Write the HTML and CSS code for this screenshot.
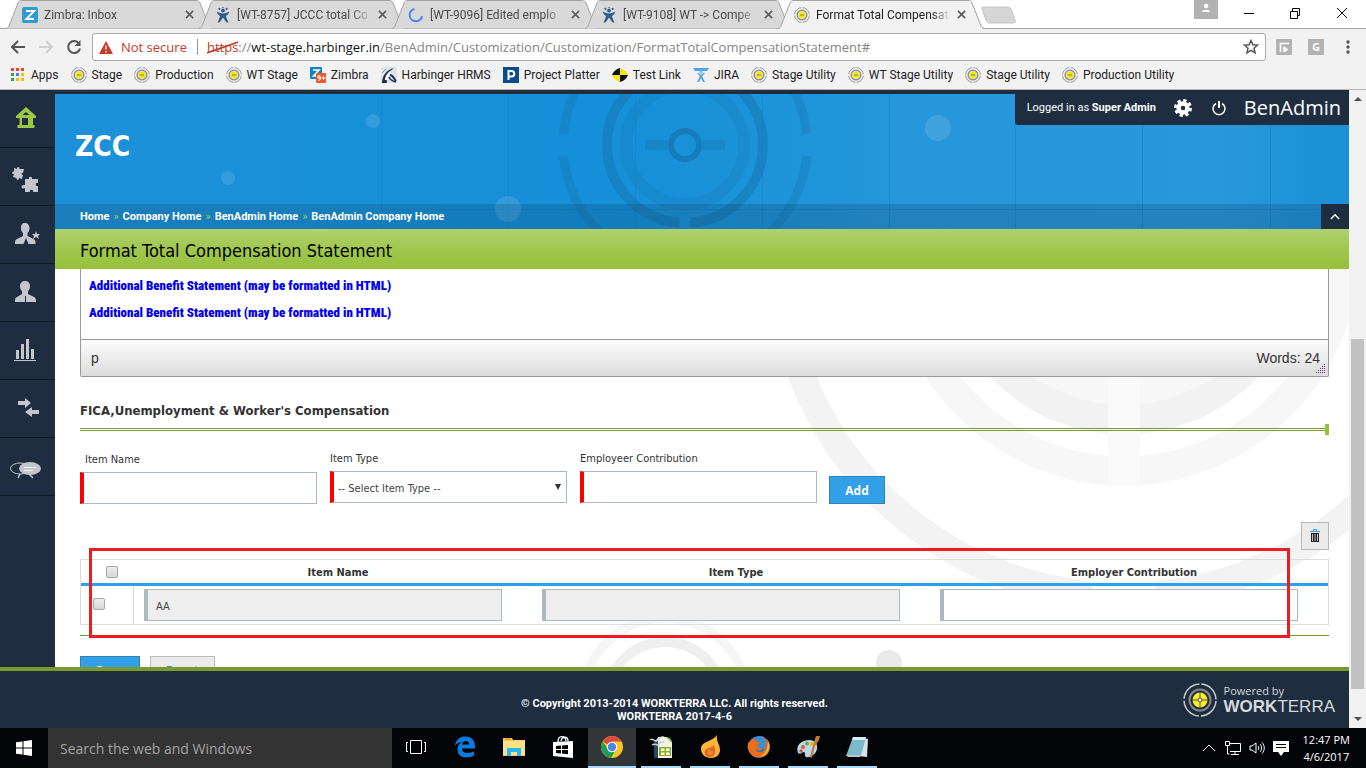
FILE: index.html
```
<!DOCTYPE html>
<html lang="en">

<head>
  <meta charset="UTF-8" />
  <meta name="viewport" content="width=device-width, initial-scale=1.0" />
  <title>Format Total Compensation Statement</title>
  <link rel="stylesheet" href="styles.css">
</head>

<body>
  <!-- Shared icons -->
  <svg class="sprite" aria-hidden="true">
    <symbol id="target" viewBox="0 0 16 16">
      <circle cx="8" cy="8" r="7.400" fill="#f4f4f4" stroke="#9a9a9a" stroke-width="1" />
      <circle cx="8" cy="8" r="4.800" fill="#e8e8e8" stroke="#909090" stroke-width="1.500" />
      <circle cx="8" cy="8" r="3.500" fill="#f3e71c" />
      <path d="M6 8h4" stroke="#8a8428" stroke-width="1" />
      <path d="M8 0v2M8 14v2M0 8h2M14 8h2" stroke="#fff" />
    </symbol>
    <symbol id="jira" viewBox="0 0 16 16">
      <circle cx="8" cy="3.600" r="1.900" />
      <circle cx="4.400" cy="1.800" r="1.100" />
      <circle cx="11.600" cy="1.800" r="1.100" />
      <circle cx="8" cy=".8" r=".8" />
      <path d="M1.800 4.800c2 .4 3.600 1.600 6.200 1.600s4.200-1.200 6.200-1.600c-.2 2-1.700 3.200-3.400 4.200l2.600 6.400c-1.300.4-2.300 0-2.700-.8L8 10.600l-2.700 4c-.4.8-1.400 1.200-2.700.8l2.600-6.400C3.500 8 2 6.800 1.800 4.800z" />
    </symbol>
    <symbol id="tab-shape" viewBox="0 0 206 29" preserveAspectRatio="none">
      <path d="M0 28.500C2 28 2.500 27 3 26L12 3C13 1 14 .5 16 .5H190C192 .5 193 1 194 3L203 26C203.500 27 204 28 206 28.500" stroke="#a3a3a3" />
    </symbol>
    <symbol id="close" viewBox="0 0 10 10">
      <path d="M1 1l8 8M9 1L1 9" stroke="#5a5a5a" stroke-width="1.700" />
    </symbol>
  </svg>

  <!-- Browser tabs -->
  <div class="tab-strip">
    <div class="tab">
      <svg class="tab-bg"><use href="#tab-shape" /></svg>
      <svg class="icon" viewBox="0 0 16 16"><rect width="16" height="16" rx="2" fill="#2f9bd0" /><path d="M4 4h8L4.500 12H12" fill="none" stroke="#fff" stroke-width="2" /></svg>
      <span class="tab-title">Zimbra: Inbox</span>
      <button class="tab-close" aria-label="Close tab"><svg><use href="#close" /></svg></button>
    </div>
    <div class="tab">
      <svg class="tab-bg"><use href="#tab-shape" /></svg>
      <svg class="icon jira-dark"><use href="#jira" /></svg>
      <span class="tab-title">[WT-8757] JCCC total Co</span>
      <button class="tab-close" aria-label="Close tab"><svg><use href="#close" /></svg></button>
    </div>
    <div class="tab">
      <svg class="tab-bg"><use href="#tab-shape" /></svg>
      <svg class="icon" viewBox="0 0 16 16"><path d="M6.500 2A6.200 6.200 0 1 0 14 9" fill="none" stroke="#4285f4" stroke-width="2" /></svg>
      <span class="tab-title">[WT-9096] Edited emplo</span>
      <button class="tab-close" aria-label="Close tab"><svg><use href="#close" /></svg></button>
    </div>
    <div class="tab">
      <svg class="tab-bg"><use href="#tab-shape" /></svg>
      <svg class="icon jira-dark"><use href="#jira" /></svg>
      <span class="tab-title">[WT-9108] WT -&gt; Compe</span>
      <button class="tab-close" aria-label="Close tab"><svg><use href="#close" /></svg></button>
    </div>
    <div class="tab active">
      <svg class="tab-bg"><use href="#tab-shape" /></svg>
      <svg class="icon"><use href="#target" /></svg>
      <span class="tab-title">Format Total Compensati</span>
      <button class="tab-close" aria-label="Close tab"><svg><use href="#close" /></svg></button>
    </div>
    <button class="new-tab" aria-label="New tab"><svg viewBox="0 0 36 18"><path d="M3 1h24c2 0 3 .5 4 2l4 11c.5 2 0 3-2 3H10c-2 0-3-1-4-3L2 3C1.500 2 2 1 3 1z" fill="#d6d6d6" stroke="#c4c4c4" /></svg></button>
    <div class="window-controls">
      <button class="profile" aria-label="Profile"><svg viewBox="0 0 24 19"><circle cx="12" cy="6" r="2.300" fill="#fff" /><path d="M8 12c0-3 8-3 8 0z" fill="#fff" /></svg></button>
      <button aria-label="Minimize"><svg viewBox="0 0 12 12"><path d="M1 6.500h10" /></svg></button>
      <button aria-label="Restore"><svg viewBox="0 0 12 12"><path d="M1.500 4.500h7v7h-7zM3.500 4V1.500h7v7H9" /></svg></button>
      <button aria-label="Close window"><svg viewBox="0 0 12 12"><path d="M1 1l10 10M11 1L1 11" /></svg></button>
    </div>
  </div>

  <!-- Address bar -->
  <div class="toolbar">
    <button class="nav-btn" aria-label="Back"><svg viewBox="0 0 16 16"><path d="M15 8H2M8 2L2 8l6 6" stroke="#555" /></svg></button>
    <button class="nav-btn" aria-label="Forward"><svg viewBox="0 0 16 16"><path d="M1 8h13M8 2l6 6-6 6" stroke="#cfcfcf" /></svg></button>
    <button class="nav-btn" aria-label="Reload"><svg viewBox="0 0 16 16"><path d="M13 4.500A6 6 0 1 0 14 9.500" stroke="#555" /><path d="M14.500 1v6h-6z" fill="#555" /></svg></button>
    <div class="address">
      <svg class="warn" viewBox="0 0 14 13"><path d="M7 0l7 13H0z" fill="#c53929" /><path d="M7 4.500v4M7 10v1.500" stroke="#fff" stroke-width="1.400" /></svg>
      <span class="not-secure">Not secure</span>
      <span class="url"><span class="scheme">https<svg viewBox="0 0 34 14" preserveAspectRatio="none"><path d="M0 13L34 2" stroke="#c53929" stroke-width="1.800" /></svg></span>://<b>wt-stage.harbinger.in</b>/BenAdmin/Customization/Customization/FormatTotalCompensationStatement#</span>
      <svg class="star" viewBox="0 0 16 16"><path d="M8 1.500l1.900 4.300 4.600.4-3.500 3.100 1.100 4.600L8 11.400l-4.100 2.500L5 9.300 1.500 6.200l4.600-.4z" fill="none" stroke="#555" stroke-width="1.500" /></svg>
    </div>
    <button class="ext" aria-label="Extension"><svg viewBox="0 0 16 16"><rect width="16" height="16" rx="1" fill="#b3b3b3" /><path d="M4.500 13V4.500H13M8 13V7.500" fill="none" stroke="#fff" stroke-width="1.600" /><path d="M9 8l3.500 2.500L9 13z" fill="#fff" /></svg></button>
    <button class="ext ext-g">G</button>
    <button class="dots" aria-label="Menu"><svg viewBox="0 0 4 14"><circle cx="2" cy="2" r="1.700" /><circle cx="2" cy="7" r="1.700" /><circle cx="2" cy="12" r="1.700" /></svg></button>
  </div>

  <!-- Bookmarks -->
  <nav class="bookmarks">
    <a href="#"><svg class="icon" viewBox="0 0 16 16"><path d="M1 1h3v3H1zM6 1h3v3H6zM11 1h3v3h-3z" fill="#ea4335" /><path d="M1 6h3v3H1zM1 11h3v3H1z" fill="#34a853" /><path d="M6 6h3v3H6z" fill="#4285f4" /><path d="M11 6h3v3h-3zM6 11h3v3H6zM11 11h3v3h-3z" fill="#fbbc05" /></svg>Apps</a>
    <a href="#"><svg class="icon"><use href="#target" /></svg>Stage</a>
    <a href="#"><svg class="icon"><use href="#target" /></svg>Production</a>
    <a href="#"><svg class="icon"><use href="#target" /></svg>WT Stage</a>
    <a href="#"><svg class="icon" viewBox="0 0 16 16"><rect width="12" height="12" rx="1" fill="#0c84c6" /><path d="M3 3h6L3.500 9H9" fill="none" stroke="#fff" stroke-width="1.600" /><rect x="6" y="6" width="10" height="10" rx="1" fill="#ee5a28" /><circle cx="9" cy="10" r="1.300" fill="none" stroke="#fff" /><path d="M10.300 10v2.500l-2 1M11.500 11h4M13.500 9v4" fill="none" stroke="#fff" /></svg>Zimbra</a>
    <a href="#"><svg class="icon" viewBox="0 0 16 16"><rect width="16" height="16" fill="#dfe4e6" /><path d="M1 16C1 9 5 3 13 1 8 5 5 10 6 16z" fill="#252c57" /><path d="M4 13C4 9 7 5 11 3 8 7 7 9 7 13z" fill="#fff" /><path d="M9 8c3 0 4 4 6 6" fill="none" stroke="#252c57" stroke-width="2" /><path d="M8 10c1 3 3 4 7 5" fill="none" stroke="#252c57" stroke-width="1.500" /><path d="M1 6l4-4" stroke="#5bb4a0" /></svg>Harbinger HRMS</a>
    <a href="#"><svg class="icon" viewBox="0 0 16 16"><rect width="16" height="16" fill="#0d4c8c" /><path d="M5.500 13V4H8.500a2.500 2.500 0 0 1 0 5.500H6" fill="none" stroke="#fff" stroke-width="2" /></svg>Project Platter</a>
    <a href="#"><svg class="icon" viewBox="0 0 16 16"><path d="M8 1v7H0C1 5 4 2 8 1z" fill="#111" /><path d="M8 1v7h8C15 5 12 2 8 1zM8 15V8H0c1 3 4 6 8 7z" fill="#f7e51c" /><path d="M8 15V8h8c-1 3-4 6-8 7z" fill="#111" /></svg>Test Link</a>
    <a href="#"><svg class="icon" viewBox="0 0 16 16"><path d="M0 1h16l-2 3H2zM4 6l3 3-3 6h2l2-4 2 4h2L9 9l3-3h-2L8 8 6 6z" fill="#4ea3dd" /><circle cx="8" cy="5" r="1.800" fill="#8cc6ec" /></svg>JIRA</a>
    <a href="#"><svg class="icon"><use href="#target" /></svg>Stage Utility</a>
    <a href="#"><svg class="icon"><use href="#target" /></svg>WT Stage Utility</a>
    <a href="#"><svg class="icon"><use href="#target" /></svg>Stage Utility</a>
    <a href="#"><svg class="icon"><use href="#target" /></svg>Production Utility</a>
  </nav>

  <!-- Web page -->
  <div class="viewport">
    <div class="page">
      <div class="page-body">
        <nav class="sidebar">
          <a href="#" aria-label="Home"><svg viewBox="0 0 32 32"><path d="M16 4l10 9v2H6v-2zM12.500 12h7L16 9zM9.500 15h2.500v7h6v-7h5v7h1.500v3H7.500v-3h2z" fill="#9bc943" fill-rule="evenodd" /></svg></a>
          <a href="#" aria-label="Modules"><svg viewBox="0 0 32 32"><path d="M4 7l3 1c0-3 3-2 2.500 0L14 8l-1 4c-2-.5-2 2 0 2l-1 4-3-1c0 3-3 2-2.500 0L3 16l1-3c-3 0-2-3 0-2.500z" /><path d="M15 18h4c-1-3 4-3 3 0h6v4c-3-1-3 4 0 3v6h-5c1-3-4-3-3 0h-5v-4c-4 2-5-4 0-3z" /></svg></a>
          <a href="#" aria-label="Employee"><svg viewBox="0 0 32 32"><path d="M15 4c3 0 4.500 2 4.500 5s-1 4-2 5v3l6 3c2 1 2 2 2 5h-7l-2.500-6-2.500 6H5c0-3 0-4 2-5l6-3v-3c-1-1-2-2-2-5s1-5 4-5z" /><path d="M26 12l1 3h3l-2 2 1 3-3-2-3 2 1-3-2-2h3z" /></svg></a>
          <a href="#" aria-label="Users"><svg viewBox="0 0 32 32"><path d="M15 4c3 0 5 2 5 5s-1 4-2 5v3l6 3c2 1 2 2 2 5H16v-6h-1v6H5c0-3 0-4 2-5l5-3v-3c-1-1-2-2-2-5s2-5 5-5z" /></svg></a>
          <a href="#" aria-label="Reports"><svg viewBox="0 0 32 32"><path d="M6 15h3v9H6zM11 9h3v15h-3zM16 4h3v20h-3zM21 14h3v10h-3zM4 25h22v1H4z" /></svg></a>
          <a href="#" aria-label="Transfers"><svg viewBox="0 0 32 32"><path d="M8 8h7V5l6 5-6 5v-3H8zM29 17h-7v-3l-7 5 7 5v-3h7z" /></svg></a>
          <a href="#" aria-label="Messages"><svg viewBox="0 0 32 32"><ellipse cx="10" cy="17.500" rx="9.500" ry="5.500" fill="none" stroke="#c3c7cc" /><path d="M10 23l-2 4M19 23l4 4" stroke="#c3c7cc" stroke-width="1.500" /><ellipse cx="20" cy="17.500" rx="11" ry="6.500" /><path d="M14 16.500h12M14 19.500h9" stroke="#eef0f2" /></svg></a>
        </nav>

        <div class="main">
          <header class="banner">
            <svg class="banner-art" viewBox="55 94 1294 135" preserveAspectRatio="xMidYMin slice">
              <g stroke="#1583c6" stroke-opacity=".6">
                <path d="M381.500 94v135M508.500 94v135M635.500 94v135M762.500 94v135M889.500 94v135M1015.500 94v135M1142.500 94v135M1270.500 94v135M381 209.500h968" />
              </g>
              <g fill="none" stroke="#146fa8">
                <circle cx="685" cy="145" r="122" stroke-width="9" stroke-opacity=".3" stroke-dasharray="361 22" stroke-dashoffset="-11" />
                <circle cx="685" cy="145" r="78" stroke-width="10" stroke-opacity=".42" stroke-dasharray="234 11" stroke-dashoffset="-128" />
                <circle cx="685" cy="145" r="59" stroke-width="12" stroke-opacity=".18" />
                <circle cx="685" cy="145" r="14" stroke-width="6" stroke-opacity=".6" />
                <path d="M645 145h23M702 145h23" stroke-width="10" stroke-opacity=".3" />
              </g>
              <g fill="#fff" fill-opacity=".12">
                <circle cx="373" cy="121" r="7" />
                <circle cx="228" cy="178" r="7" />
                <circle cx="508" cy="209" r="13" />
                <circle cx="938" cy="128" r="13" />
              </g>
            </svg>
            <div class="banner-top">
              <h1>ZCC</h1>
              <div class="user-bar">
                <span>Logged in as <b>Super Admin</b></span>
                <button aria-label="Settings"><svg viewBox="0 0 18 18"><circle cx="9" cy="9" r="4.500" fill="none" stroke="#fff" stroke-width="4.500" /><circle cx="9" cy="9" r="7.500" fill="none" stroke="#fff" stroke-width="3" stroke-dasharray="3.300 2.590" /></svg></button>
                <button aria-label="Log out"><svg viewBox="0 0 18 18"><path d="M6 4.500a6 6 0 1 0 6 0" fill="none" stroke="#fff" stroke-width="1.500" /><path d="M9 2v7" stroke="#fff" stroke-width="2" /></svg></button>
                <span class="brand">BenAdmin</span>
              </div>
            </div>
            <nav class="breadcrumb">
              <a href="#">Home</a><i>»</i><a href="#">Company Home</a><i>»</i><a href="#">BenAdmin Home</a><i>»</i><a href="#">BenAdmin Company Home</a>
              <button class="collapse" aria-label="Collapse header"><svg viewBox="0 0 12 8"><path d="M1 7l5-5 5 5" fill="none" stroke="#fff" stroke-width="1.700" /></svg></button>
            </nav>
          </header>

          <h2 class="page-title">Format Total Compensation Statement</h2>

          <main class="content">
            <svg class="content-art" viewBox="55 269 1294 398" preserveAspectRatio="xMaxYMin slice">
              <circle cx="1124" cy="250" r="156" fill="#f7f7f7" />
              <g fill="none">
                <circle cx="1124" cy="250" r="170" stroke="#f2f2f2" stroke-width="29" />
                <circle cx="1124" cy="250" r="221" stroke="#f7f7f7" stroke-width="29" />
                <circle cx="1124" cy="250" r="346" stroke="#f3f3f3" stroke-width="27" />
                <path d="M1124 269v217" stroke="#fafafa" stroke-width="32" />
                <path d="M1124 580v34" stroke="#fff" stroke-width="62" />
                <circle cx="665" cy="700" r="82" stroke="#f6f6f6" stroke-width="9" />
                <circle cx="665" cy="700" r="58" stroke="#efefef" stroke-width="10" />
              </g>
              <circle cx="889" cy="663" r="13" fill="#e9e9e9" />
            </svg>

            <div class="editor">
              <div class="editor-body">
                <p>Additional Benefit Statement (may be formatted in HTML)</p>
                <p>Additional Benefit Statement (may be formatted in HTML)</p>
              </div>
              <div class="editor-status">
                <span>p</span>
                <span>Words: 24</span>
                <svg class="grip" viewBox="0 0 10 10"><path d="M8 1.500h1M6 3.500h3M4 5.500h5M2 7.500h7M0 9.500h9" stroke="#84307e" stroke-dasharray="1 1" /></svg>
              </div>
            </div>

            <h3>FICA,Unemployment &amp; Worker's Compensation</h3>
            <div class="rule"></div>

            <form class="item-form">
              <div class="field first">
                <label for="item-name">Item Name</label>
                <input type="text" id="item-name" />
              </div>
              <div class="field">
                <label for="item-type">Item Type</label>
                <div class="select-wrap">
                  <select id="item-type">
                    <option>-- Select Item Type --</option>
                  </select>
                </div>
              </div>
              <div class="field">
                <label for="contribution">Employeer Contribution</label>
                <input type="text" id="contribution" />
              </div>
              <button type="button" class="btn btn-primary add">Add</button>
            </form>

            <div class="table-tools">
              <button class="trash" aria-label="Delete"><svg viewBox="0 0 12 14"><path d="M1 2.500h10M4.500 2V.5h3V2" fill="none" stroke="#32a0e8" /><path d="M2 4h8v9H2z" fill="#222" /><path d="M3.500 5v7M6 5v7M8.500 5v7" stroke="#ebebeb" stroke-width=".8" /></svg></button>
            </div>

            <div class="table-wrap">
              <table>
                <thead>
                  <tr>
                    <th class="check"><input type="checkbox" aria-label="Select all" /></th>
                    <th>Item Name</th>
                    <th>Item Type</th>
                    <th>Employer Contribution</th>
                  </tr>
                </thead>
                <tbody>
                  <tr>
                    <td class="check"><input type="checkbox" aria-label="Select AA" /></td>
                    <td><input type="text" value="AA" aria-label="Item Name" readonly /></td>
                    <td><input type="text" aria-label="Item Type" readonly /></td>
                    <td><input type="text" aria-label="Employer Contribution" /></td>
                  </tr>
                </tbody>
              </table>
              <div class="highlight"></div>
            </div>

            <div class="actions">
              <button class="btn btn-primary">Save</button>
              <button class="btn">Reset</button>
            </div>
          </main>
        </div>
      </div>

      <footer class="footer">
        <p>© Copyright 2013-2014 WORKTERRA LLC. All rights reserved.<br>WORKTERRA 2017-4-6</p>
        <div class="powered">
          <svg viewBox="0 0 34 34"><circle cx="17" cy="17" r="16" fill="none" stroke="#c9ccd0" stroke-width="1.500" stroke-dasharray="23.100 2" stroke-dashoffset="-1" /><circle cx="17" cy="17" r="10.500" fill="none" stroke="#85878a" stroke-width="2" /><circle cx="17" cy="17" r="7.500" fill="#f7ec25" /><path d="M17 9v16M9 17h16" stroke="#55562f" /><circle cx="17" cy="17" r="2" fill="#fff" stroke="#55562f" /></svg>
          <div class="powered-text">
            <span>Powered by</span>
            <span class="workterra"><b>WORK</b>TERRA</span>
          </div>
        </div>
      </footer>
    </div>

    <div class="scrollbar">
      <svg viewBox="0 0 8 4"><path d="M0 4l4-4 4 4z" /></svg>
      <div class="track"><div class="thumb"></div></div>
      <svg viewBox="0 0 8 4"><path d="M0 0l4 4 4-4z" /></svg>
    </div>
  </div>

  <!-- Windows taskbar -->
  <div class="taskbar">
    <button class="start" aria-label="Start"><svg viewBox="0 0 16 16"><path d="M0 2.300l6.500-.9v6.100H0zM7.500 1.200L16 0v7.500H7.500zM0 8.500h6.500v6.100L0 13.700zM7.500 8.500H16V16l-8.500-1.200z" fill="#fff" /></svg></button>
    <input class="search" type="text" placeholder="Search the web and Windows" aria-label="Search the web and Windows" />
    <button class="app" aria-label="Task View"><svg viewBox="0 0 24 24"><path d="M6.500 5.500h11v13h-11zM4 7.500H2.500v9H4M20 7.500h1.500v9H20" fill="none" stroke="#fff" /></svg></button>
    <button class="app" aria-label="Edge"><svg viewBox="0 0 24 24"><path d="M2 11C3 4 7 1.500 12.500 1.500 18.500 1.500 22 5.500 22 11v2.500H9c0 3 2.500 4.500 5.500 4.500 2.500 0 4.500-.6 6.500-1.700V20.500c-2 1.200-4.700 2-7.500 2C8 22.500 4.500 19.500 4.500 14.500c0-3.500 2-6.200 5-7.700C6 7 3.500 8.600 2 11zm7.200-1.500h6.900c0-2.300-1.300-3.600-3.500-3.600-2 0-3.200 1.600-3.400 3.600z" fill="#0a7be0" fill-rule="evenodd" /></svg></button>
    <button class="app" aria-label="File Explorer"><svg viewBox="0 0 24 24"><path d="M1 3h9l1 2h12v16H1z" fill="#f4c95c" /><path d="M3 3h6v2H3z" fill="#e7a92c" /><path d="M1 6h22v14H1z" fill="#ffe08a" /><path d="M5 21v-8h14v8h-4v-4H9v4z" fill="#27b9ee" /></svg></button>
    <button class="app" aria-label="Store"><svg viewBox="0 0 24 24"><path d="M2 7l20-1v17L2 21z" fill="#fff" /><path d="M7 7c0-7 7-7 8-1M10 6c1-5 7-5 7 0" fill="none" stroke="#fff" stroke-width="1.300" /><path d="M5 11l5-.5V14H5zM11 10.400l6-.4v4h-6zM5 15h5v3.500L5 18zM11 15h6v4.200l-6-.6z" fill="#000" /></svg></button>
    <button class="app current" aria-label="Chrome"><svg viewBox="0 0 24 24"><circle cx="12" cy="12" r="11" fill="#fbc61d" /><path d="M12 12L2.500 6.500A11 11 0 0 1 21.500 6.500H12z" fill="#dd4b3e" /><path d="M2.500 6.500A11 11 0 0 0 11 23l5-8.500-8-.5z" fill="#1f9d58" /><circle cx="12" cy="12" r="5.200" fill="#fff" /><circle cx="12" cy="12" r="4.200" fill="#4a86ee" /></svg></button>
    <button class="app running" aria-label="Calc"><svg viewBox="0 0 24 24"><path d="M5 6h5v17H5z" fill="#274763" /><path d="M9 2h9l5 5v16H9z" fill="#eef2ea" /><path d="M17 2c3 0 6 2 6 6z" fill="#86b822" /><path d="M10 12h12v9H10z" fill="#8cae1c" /><path d="M12 13.500h3.500v2.500H12zM17 13.500h3.500v2.500H17zM12 17.500h3.500V20H12zM17 17.500h3.500V20H17z" fill="#fff" /><path d="M0 5c4-3 5 0 7 0 2-3 5-4 9-4-5 2-5 4-9 6-3-2-4-2-7-2z" fill="#ddd" /><path d="M3 10c3-2 4 0 6 0 2-3 3-3 6-3" fill="none" stroke="#ccc" stroke-width="1.500" /></svg></button>
    <button class="app running" aria-label="Flame"><svg viewBox="0 0 24 24"><path d="M19 0C18 7 22 9 22 15c0 5-4 8-9 8-6 0-10-4-10-9C3 6 14 7 19 0z" fill="#fdb43b" /><path d="M16 10c0 2 2 4 1 8-1 3-3 4-5 4-4 0-6-3-5-6 1-4 6-2 9-6z" fill="#e0661e" /><path d="M12 14c-3 1-4 5-1 6s5-2 4-5c-1 2-2 2-3-1z" fill="#f08a30" /></svg></button>
    <button class="app running" aria-label="Firefox"><svg viewBox="0 0 24 24"><circle cx="12" cy="12" r="11" fill="#2676c4" /><path d="M14 1c4 1 7 5 6 10-1 4-4 7-7 6 3 0 4-2 4-4-2 1-3 0-5-1-2 0-2-2 0-3l1-2C9 7 8 5 8 3 4 4 3 6 3 8L2 6C0 10 0 14 3 18c4 6 14 6 18 0 3-5 2-10-1-14 1 4 0 9-4 12-3 2-7 1-8-2 3 2 6 2 8-1 3-4 2-9-2-12z" fill="#ed6d1c" /><path d="M21 6c3 7 0 15-9 16 6-2 9-8 9-16z" fill="#fbc42e" /><path d="M8 3c2-2 6-2 8-1 3 3 4 8 1 11-2 1-4 0-5-1-2 0-2-2 0-3l1-2C10 7 8 5 8 3z" fill="#3a8fd6" /></svg></button>
    <button class="app running" aria-label="Paint"><svg viewBox="0 0 24 24"><path d="M2 18C-1 10 6 5 13 5c6 0 9 4 8 9-1 6-8 9-11 8-2-1 0-4-2-5-2 0-3 3-6 1z" fill="#b8d9ea" /><circle cx="7" cy="12" r="2" fill="#e9593c" /><circle cx="11" cy="8.500" r="2" fill="#6fae35" /><circle cx="16" cy="9" r="2" fill="#f0b429" /><circle cx="5" cy="16" r="1.700" fill="#d84c38" /><path d="M20 1h4l-1 4-4 6-3 12-2-1 3-12z" fill="#c8792f" /></svg></button>
    <button class="app running" aria-label="Notepad"><svg viewBox="0 0 24 24"><path d="M19 3l4 1-1 18-9-1z" fill="#d8e4e4" /><path d="M8 2h13l-5 19H1z" fill="#7cbac9" /><path d="M8 2h13l-1 3H7z" fill="#d6eef2" /><path d="M1 20h15l-1 2H3z" fill="#b7c9cc" /></svg></button>
    <div class="tray">
      <svg viewBox="0 0 16 16"><path d="M2 11l6-6 6 6" /></svg>
      <svg viewBox="0 0 16 16"><path d="M4 3.500h11.500v8H5M10 12v2.500M6 14.500h8M.5 1.500h4v4h-4zM2.500 6v8h2" /></svg>
      <svg viewBox="0 0 16 16"><path d="M1 6v4h2l4 3V3L3 6zM9 6c1 1 1 3 0 4M11 4c2 2 2 6 0 8M13 2.500c3 3 3 8 0 11" /></svg>
      <svg viewBox="0 0 16 16"><path d="M0 1h16v11H11l-3 4-3-4H0z" fill="#fff" stroke="none" /><path d="M3 4.500h10M3 7.500h10" stroke="#000" /></svg>
      <div class="clock">12:47 PM<br>4/6/2017</div>
    </div>
  </div>
</body>

</html>
```
FILE: styles.css
```
* {
  margin: 0;
  padding: 0;
  box-sizing: border-box;
}

body {
  height: 100vh;
  display: flex;
  flex-direction: column;
  overflow: hidden;
  font-family: "Open Sans", "Noto Sans", sans-serif;
  font-size: 11px;
  color: #333;
  background: #fff;
}

button {
  border: none;
  background: none;
  font: inherit;
  color: inherit;
}

a {
  color: inherit;
  text-decoration: none;
}

svg {
  display: block;
  flex: none;
}

.sprite {
  position: absolute;
  width: 0;
  height: 0;
}

.icon {
  width: 16px;
  height: 16px;
}

.jira-dark {
  fill: #2f5c8c;
}

/* Browser tabs */
.tab-strip {
  display: flex;
  height: 29px;
  padding-left: 6px;
  border-bottom: 1px solid #a3a3a3;
}

.tab {
  position: relative;
  display: flex;
  align-items: center;
  width: 206px;
  height: 29px;
  margin-right: -13px;
  padding: 0 16px 0 16px;
  gap: 6px;
  font-family: Roboto, sans-serif;
  font-size: 12px;
  color: #4a4a4a;
  z-index: 1;
}

.tab-bg {
  position: absolute;
  left: 0;
  top: 0;
  width: 100%;
  height: 29px;
  fill: #d9d9d9;
  z-index: -1;
}

.tab.active {
  color: #222;
  z-index: 2;
}

.tab.active .tab-bg {
  fill: #f2f2f2;
}

.tab.active::after {
  content: "";
  position: absolute;
  left: 2px;
  right: 2px;
  bottom: 0;
  height: 1px;
  background: #f2f2f2;
}

.tab-title {
  flex: 1;
  white-space: nowrap;
  -webkit-mask-image: linear-gradient(90deg, #000 85%, transparent);
  mask-image: linear-gradient(90deg, #000 85%, transparent);
}

.tab-close svg {
  width: 9px;
  height: 9px;
  margin-right: 2px;
}

.new-tab {
  align-self: flex-start;
  margin: 6px 0 0 9px;
}

.new-tab svg {
  width: 36px;
  height: 18px;
}

.window-controls {
  display: flex;
  align-items: flex-start;
  margin-left: auto;
}

.window-controls button {
  width: 46px;
  height: 26px;
  display: flex;
  justify-content: center;
  align-items: center;
}

.window-controls button svg {
  width: 12px;
  height: 12px;
  fill: none;
  stroke: #000;
}

.window-controls .profile {
  width: 24px;
  height: 19px;
  margin-right: 8px;
  background: #b2b2b2;
}

.window-controls .profile svg {
  width: 24px;
  height: 19px;
  stroke: none;
}

.window-controls button:last-child {
  width: 48px;
}

/* Toolbar */
.toolbar {
  display: flex;
  align-items: center;
  height: 36px;
  padding: 0 16px 0 10px;
  background: #f2f2f2;
}

.nav-btn {
  width: 28px;
}

.nav-btn svg {
  width: 16px;
  height: 16px;
  fill: none;
  stroke-width: 2;
}

.address {
  flex: 1;
  display: flex;
  align-items: center;
  height: 28px;
  margin-left: -2px;
  padding: 0 6px;
  border: 1px solid #aaa;
  border-radius: 3px;
  background: #fff;
  font-size: 13px;
}

.warn {
  width: 14px;
  height: 13px;
}

.not-secure {
  margin-left: 8px;
  padding-right: 10px;
  border-right: 1px solid #999;
  line-height: 16px;
  color: #c53929;
}

.url {
  flex: 1;
  margin-left: 9px;
  color: #858585;
  white-space: nowrap;
}

.url b {
  font-weight: normal;
  color: #111;
}

.scheme {
  position: relative;
  color: #c53929;
}

.scheme svg {
  position: absolute;
  left: 0;
  top: 2px;
  width: 100%;
  height: 14px;
}

.star {
  width: 16px;
  height: 16px;
}

.ext {
  width: 16px;
  height: 16px;
  margin-left: 16px;
}

.address + .ext {
  margin-left: 10px;
}

.ext-g {
  background: #b3b3b3;
  color: #fff;
  font-size: 11px;
  font-weight: bold;
  line-height: 16px;
}

.dots {
  margin-left: 22px;
}

.dots svg {
  width: 4px;
  height: 14px;
  fill: #555;
}

/* Bookmarks bar */
.bookmarks {
  display: flex;
  align-items: center;
  gap: 12px;
  height: 25px;
  padding: 0 10px 5px;
  border-bottom: 1px solid #b6b6b6;
  background: #f2f2f2;
  color: #222;
  font-family: Roboto, sans-serif;
  font-size: 12px;
  white-space: nowrap;
}

.bookmarks a {
  display: flex;
  align-items: center;
  gap: 5px;
}

/* Page viewport */
.viewport {
  flex: 1;
  display: flex;
  min-height: 0;
}

.page {
  flex: 1;
  display: flex;
  flex-direction: column;
  min-width: 0;
}

.page-body {
  flex: 1;
  display: flex;
  min-height: 0;
  background: #1e2d40;
}

.sidebar {
  width: 55px;
}

.sidebar a {
  display: flex;
  justify-content: center;
  align-items: center;
  height: 58px;
  padding-right: 4px;
  border-bottom: 1px solid #0e1926;
}

.sidebar svg {
  width: 32px;
  height: 32px;
  fill: #c3c7cc;
}

.main {
  flex: 1;
  display: flex;
  flex-direction: column;
  min-width: 0;
  font-family: "DejaVu Sans Condensed", "DejaVu Sans", sans-serif;
}

.banner {
  position: relative;
  margin-top: 4px;
  background: linear-gradient(90deg, #1c91d9, #158fd7 42%, #2697da 68%, #2798da 90%, #1a90d8);
}

.banner-art {
  position: absolute;
  left: 0;
  top: 0;
  width: 100%;
  height: 100%;
}

.banner-top {
  position: relative;
  display: flex;
  justify-content: space-between;
  align-items: flex-start;
  height: 110px;
  padding-left: 20px;
}

.banner h1 {
  margin-top: 36px;
  font-size: 28px;
  line-height: 34px;
  color: #fff;
}

.user-bar {
  display: flex;
  align-items: center;
  height: 31px;
  padding: 0 8px 4px 12px;
  border-bottom-left-radius: 3px;
  background: #1e2d40;
  color: #fff;
  font-family: Roboto, sans-serif;
  font-size: 11px;
}

.user-bar button {
  margin-left: 18px;
}

.user-bar svg {
  width: 18px;
  height: 18px;
}

.brand {
  margin-left: 16px;
  font-family: "Open Sans", sans-serif;
  font-size: 20px;
}

.breadcrumb {
  position: relative;
  display: flex;
  align-items: center;
  height: 25px;
  padding-left: 25px;
  background: rgba(20, 50, 80, 0.2);
  color: #fff;
  font-family: Roboto, sans-serif;
  font-size: 11px;
  font-weight: bold;
}

.breadcrumb i {
  margin: 0 4px;
  font-style: normal;
  font-weight: normal;
  color: #9bc943;
}

.collapse {
  width: 28px;
  height: 25px;
  margin-left: auto;
  background: #1e2d40;
}

.collapse svg {
  width: 10px;
  height: 7px;
  margin: 0 auto;
}

.page-title {
  height: 40px;
  padding-left: 25px;
  background: linear-gradient(#b1d06e, #9fc74b 55%, #97c03d);
  color: #000;
  font-size: 18px;
  font-weight: normal;
  line-height: 43px;
}

/* Content */
.content {
  position: relative;
  flex: 1;
  min-height: 0;
  padding: 0 20px 0 25px;
  overflow: hidden;
  background: #fff;
}

.content > * {
  position: relative;
}

.content .content-art {
  position: absolute;
  left: 0;
  top: 0;
  width: 100%;
  height: 100%;
}

.editor {
  border: 1px solid #999;
  border-top: none;
  border-radius: 0 0 2px 2px;
  background: #fff;
}

.editor-body {
  height: 70px;
  padding: 8px;
  color: #0000f0;
  font-family: Impact, "Roboto Condensed", "Liberation Sans Narrow", sans-serif;
  font-size: 13px;
  font-weight: 900;
  line-height: 17px;
}

.editor-body p {
  margin-bottom: 10px;
}

.editor-status {
  position: relative;
  display: flex;
  justify-content: space-between;
  align-items: center;
  height: 37px;
  padding: 0 8px 0 10px;
  border-top: 1px solid #999;
  background: linear-gradient(#fdfdfd, #dcdcdc);
  font-family: "Liberation Sans", Arial, sans-serif;
  font-size: 14px;
}

.grip {
  position: absolute;
  right: 2px;
  bottom: 3px;
  width: 10px;
  height: 10px;
}

.content h3 {
  margin-top: 24px;
  font-size: 13px;
  line-height: 20px;
}

.rule {
  height: 3px;
  margin-top: 7px;
  border-top: 1px solid #7a9a2e;
  border-bottom: 1px solid #7a9a2e;
}

.rule::after {
  content: "";
  position: absolute;
  right: 0;
  top: -5px;
  width: 4px;
  height: 11px;
  background: #97c03d;
}

.item-form {
  display: flex;
  align-items: flex-end;
  gap: 13px;
  margin-top: 18px;
}

.field {
  width: 237px;
  padding-bottom: 1px;
}

.field label {
  display: block;
  height: 22px;
  line-height: 20px;
}

.field.first {
  padding-bottom: 0;
}

.field.first label {
  padding-left: 5px;
}

input[type="text"],
select {
  width: 100%;
  height: 32px;
  padding: 2px 8px 0;
  border: 1px solid #abb9c1;
  border-left: 4px solid #abb9c1;
  border-radius: 0;
  background: #fff;
  color: #444;
  font: inherit;
}

.field input[type="text"],
.field select {
  display: block;
  border-left-color: #f00;
}

.field select {
  appearance: none;
  padding: 2px 4px 0;
}

.select-wrap {
  position: relative;
}

.select-wrap::after {
  content: "";
  position: absolute;
  right: 6px;
  top: 13px;
  border: 3px solid transparent;
  border-top: 6px solid #333;
  border-bottom: none;
}

.btn {
  height: 28px;
  padding: 0 15px;
  border: 1px solid #bbb;
  background: #ebebeb;
  color: #2b8cce;
  font-family: "Open Sans", sans-serif;
  font-size: 12px;
  font-weight: bold;
}

.btn-primary {
  border-color: #2c86ae;
  background: #32a0e8;
  color: #fff;
}

.add {
  width: 56px;
  margin-left: -1px;
}

.table-tools {
  display: flex;
  justify-content: flex-end;
  margin-top: 18px;
}

.trash {
  width: 28px;
  height: 28px;
  border: 1px solid #b8b8b8;
  background: #ebebeb;
}

.trash svg {
  width: 12px;
  height: 14px;
  margin: 0 auto;
}

.table-wrap {
  margin-top: 9px;
  padding-bottom: 10px;
  border-bottom: 1px solid #7a9a2e;
}

table {
  width: 100%;
  table-layout: fixed;
  border-collapse: separate;
  border-spacing: 0;
  border: 1px solid #ddd;
}

th {
  height: 26px;
  padding: 2px 0 0 10px;
  border-bottom: 3px solid #32a0e8;
}

td {
  height: 38px;
  padding: 0 30px 0 10px;
}

.check {
  width: 53px;
}

th.check {
  padding-top: 0;
}

td.check {
  padding: 0 0 2px 12px;
  border-right: 1px solid #ddd;
}

input[type="checkbox"] {
  appearance: none;
  display: block;
  width: 12px;
  height: 12px;
  border: 1px solid #a5a5a5;
  border-radius: 2px;
  background: linear-gradient(#eee, #d8d8d8);
}

th input[type="checkbox"] {
  margin: 0 0 0 15px;
}

input[readonly] {
  background: #eee;
}

.highlight {
  position: absolute;
  left: 9px;
  right: 39px;
  top: -11px;
  bottom: -3px;
  border: 3px solid #ed1c24;
}

.actions {
  display: flex;
  gap: 10px;
  margin-top: 20px;
}

/* Footer */
.footer {
  position: relative;
  display: flex;
  justify-content: center;
  align-items: center;
  height: 61px;
  padding-top: 20px;
  border-top: 4px solid #7a9a2e;
  background: #1e2d40;
  color: #fff;
  font-family: Roboto, sans-serif;
  font-size: 11px;
  font-weight: bold;
  line-height: 13px;
  text-align: center;
}

.powered {
  position: absolute;
  right: 14px;
  top: 12px;
  display: flex;
  gap: 7px;
  color: #d5d8dc;
  font-weight: normal;
  text-align: left;
}

.powered svg {
  width: 34px;
  height: 34px;
}

.powered-text {
  display: flex;
  flex-direction: column;
  font-family: "Open Sans", sans-serif;
  font-size: 11px;
  line-height: 16px;
}

.workterra {
  font-family: "Liberation Sans", Arial, sans-serif;
  font-size: 17px;
}

/* Scrollbar */
.scrollbar {
  display: flex;
  flex-direction: column;
  align-items: center;
  width: 17px;
  padding: 7px 0;
  background: #f1f1f1;
}

.scrollbar svg {
  width: 8px;
  height: 4px;
  fill: #505050;
}

.track {
  flex: 1;
  width: 13px;
  margin: 6px 0;
}

.thumb {
  height: 58%;
  margin-top: 232px;
  background: #c1c1c1;
}

/* Taskbar */
.taskbar {
  display: flex;
  height: 40px;
  background: #020408;
}

.start {
  width: 48px;
}

.start svg {
  width: 16px;
  height: 16px;
  margin: 0 auto;
}

.taskbar .search {
  width: 344px;
  height: 40px;
  padding: 0 12px;
  border: none;
  background: #333;
  font-size: 14px;
}

.search::placeholder {
  color: #a3a3a3;
}

.app {
  width: 48px;
  margin-right: 1px;
  border-bottom: 2px solid transparent;
}

.app svg {
  width: 24px;
  height: 24px;
  margin: 0 auto;
}

.current {
  border-bottom-color: #a6d8f8;
  background: #333639;
}

.running {
  background: linear-gradient(#a6d8f8, #a6d8f8) center bottom / 40px 2px no-repeat border-box;
}

.tray {
  display: flex;
  align-items: center;
  gap: 8px;
  margin-left: auto;
  padding-right: 16px;
  color: #fff;
}

.tray svg {
  width: 16px;
  height: 16px;
  fill: none;
  stroke: #fff;
}

.clock {
  margin-left: 6px;
  font-size: 11px;
  line-height: 17px;
  text-align: center;
}
```
